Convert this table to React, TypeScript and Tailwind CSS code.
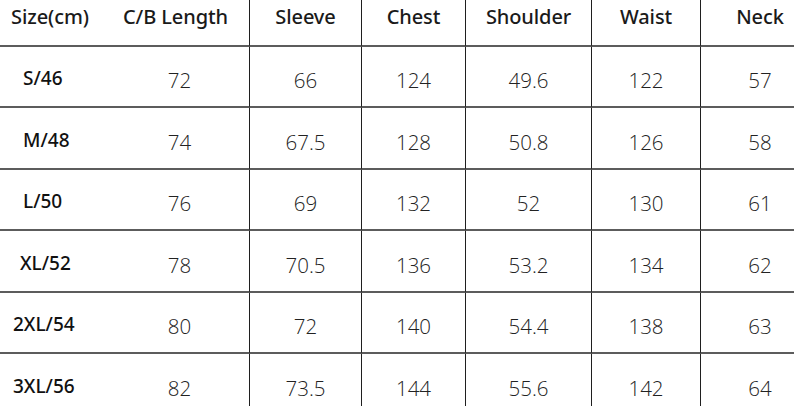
import React from 'react';

interface SizeRow {
  size: string;
  values: string[];
  height: string;
}

const headers = ['Size(cm)', 'C/B Length', 'Sleeve', 'Chest', 'Shoulder', 'Waist', 'Neck'];

const rows: SizeRow[] = [
  { size: 'S/46', values: ['72', '66', '124', '49.6', '122', '57'], height: 'h-[61px]' },
  { size: 'M/48', values: ['74', '67.5', '128', '50.8', '126', '58'], height: 'h-[62px]' },
  { size: 'L/50', values: ['76', '69', '132', '52', '130', '61'], height: 'h-[61px]' },
  { size: 'XL/52', values: ['78', '70.5', '136', '53.2', '134', '62'], height: 'h-[62px]' },
  { size: '2XL/54', values: ['80', '72', '140', '54.4', '138', '63'], height: 'h-[61px]' },
  { size: '3XL/56', values: ['82', '73.5', '144', '55.6', '142', '64'], height: 'h-[62px]' },
];

// vertical rule after columns 2..6 (no rule between size and length)
const vRule = (i: number) => (i >= 1 && i <= 5 ? 'border-r-[1.5px] border-r-[#1f1f1f]' : '');

export default function App() {
  return (
    <div className="w-[794px] h-[406px] overflow-hidden bg-white font-['Open_Sans','Noto_Sans',sans-serif] text-[#1e1e1e]">
      <div className="w-[819px] grid grid-cols-[110px_140px_112px_104px_126px_109px_118px]">
        {headers.map((h, i) => (
          <div
            key={h}
            className={`h-[47px] border-b-2 border-b-[#5c5c5c] flex items-start pt-[2px] font-['Noto_Sans','Open_Sans',sans-serif] text-[20px] font-medium text-[#1a1a1a] tracking-[-0.1px] ${vRule(i)} ${
              i === 0 ? 'pl-[11px]' : i === 1 ? 'pl-[13px]' : 'justify-center'
            }`}
          >
            {h}
          </div>
        ))}

        {rows.map((row) => (
          <React.Fragment key={row.size}>
            <div
              className={`${row.height} border-b-2 border-b-[#5c5c5c] flex items-center ${
                row.size.length > 5 ? 'pl-[13px]' : row.size.length > 4 ? 'pl-[20px]' : 'pl-[23px]'
              } pt-[4px] font-['Noto_Sans','Open_Sans',sans-serif] text-[19px] font-medium text-[#111]`}
            >
              {row.size}
            </div>
            {row.values.map((v, i) => (
              <div
                key={i}
                className={`${row.height} border-b-2 border-b-[#5c5c5c] flex items-center justify-center pt-[8px] text-[20.5px] font-light text-[#222] ${vRule(i + 1)}`}
              >
                {v}
              </div>
            ))}
          </React.Fragment>
        ))}
      </div>
    </div>
  );
}
